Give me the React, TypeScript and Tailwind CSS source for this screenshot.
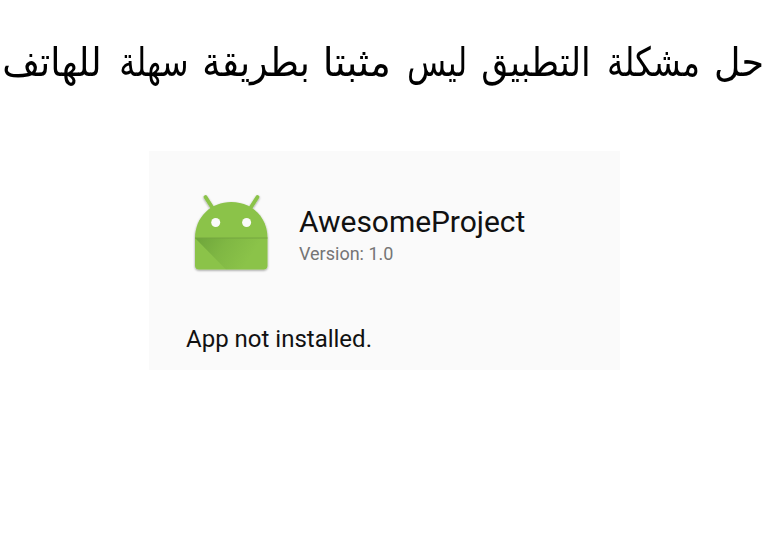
const words = [
  { text: "حل", style: "w-[64px]", scale: "scale-x-[0.91]" },
  { text: "مشكلة", style: "w-[109px]", scale: "scale-x-[0.815]" },
  { text: "التطبيق", style: "w-[124px]", scale: "scale-x-[0.87]" },
  { text: "ليس", style: "w-[76px]", scale: "scale-x-[0.8]" },
  { text: "مثبتا", style: "w-[81px]", scale: "scale-x-[0.975]" },
  { text: "بطريقة", style: "w-[121px]", scale: "scale-x-[0.905]" },
  { text: "سهلة", style: "w-[87px]", scale: "scale-x-[0.8]" },
  { text: "للهاتف", style: "w-[101px]", scale: "scale-x-[0.915]" },
];

function AndroidIcon() {
  return (
    <svg width="80" height="84" viewBox="0 0 80 84" className="shrink-0" aria-label="Android">
      <defs>
        <linearGradient id="fold" x1="4" y1="47" x2="52" y2="78" gradientUnits="userSpaceOnUse">
          <stop stopColor="#33691e" stopOpacity=".34" />
          <stop offset=".5" stopColor="#33691e" stopOpacity=".13" />
          <stop offset="1" stopColor="#33691e" stopOpacity="0" />
        </linearGradient>
        <filter id="shadow" x="-10%" y="-10%" width="120%" height="125%">
          <feDropShadow dx="0" dy="1" stdDeviation=".8" floodColor="#000" floodOpacity=".4" />
        </filter>
      </defs>
      <g filter="url(#shadow)">
        <path d="m14.5 6 9 14M66.5 6l-9 14" stroke="#8bc34a" strokeWidth="3.8" strokeLinecap="round" />
        <path d="M4 47C4 26 20 11 40.3 11S76.5 26 76.5 47V74.5Q76.5 78.5 72.5 78.5H8Q4 78.5 4 74.5Z" fill="#8bc34a" />
      </g>
      <path d="M4 47H76.5V74.5Q76.5 78.5 72.5 78.5H35Z" fill="url(#fold)" />
      <path d="M4 47H76.5" stroke="#75a641" strokeWidth="1" />
      <circle cx="24.7" cy="31.5" r="4.5" fill="#fafafa" />
      <circle cx="55.6" cy="31.5" r="4.5" fill="#fafafa" />
    </svg>
  );
}

export default function App() {
  return (
    <main className="flex h-[541px] w-[779px] flex-col overflow-hidden bg-white">
      <h1 dir="rtl" lang="ar" className="flex h-[151px] pt-[30px] pr-[15px] text-[40px] leading-[64px] font-normal whitespace-nowrap text-black font-['DejaVu_Sans',sans-serif]">
        {words.map((word) => (
          <span key={word.text} className={`${word.style} shrink-0`}>
            <span className={`${word.scale} inline-block origin-right`}>{word.text}</span>{" "}
          </span>
        ))}
      </h1>
      <section className="ml-[149px] h-[219px] w-[471px] bg-[#fafafa] font-[Roboto,sans-serif]">
        <div className="flex h-[172px] pt-[40px] pl-[42px]">
          <AndroidIcon />
          <div className="pl-[28px] pt-[13px]">
            <div className="text-[30px] leading-[36px] tracking-[-0.05px] text-[#111]">AwesomeProject</div>
            <div className="text-[18px] leading-[28px] text-[#757575]">Version: 1.0</div>
          </div>
        </div>
        <p className="pl-[37px] text-[24px] leading-[32px] text-[#111]">App not installed.</p>
      </section>
    </main>
  );
}
